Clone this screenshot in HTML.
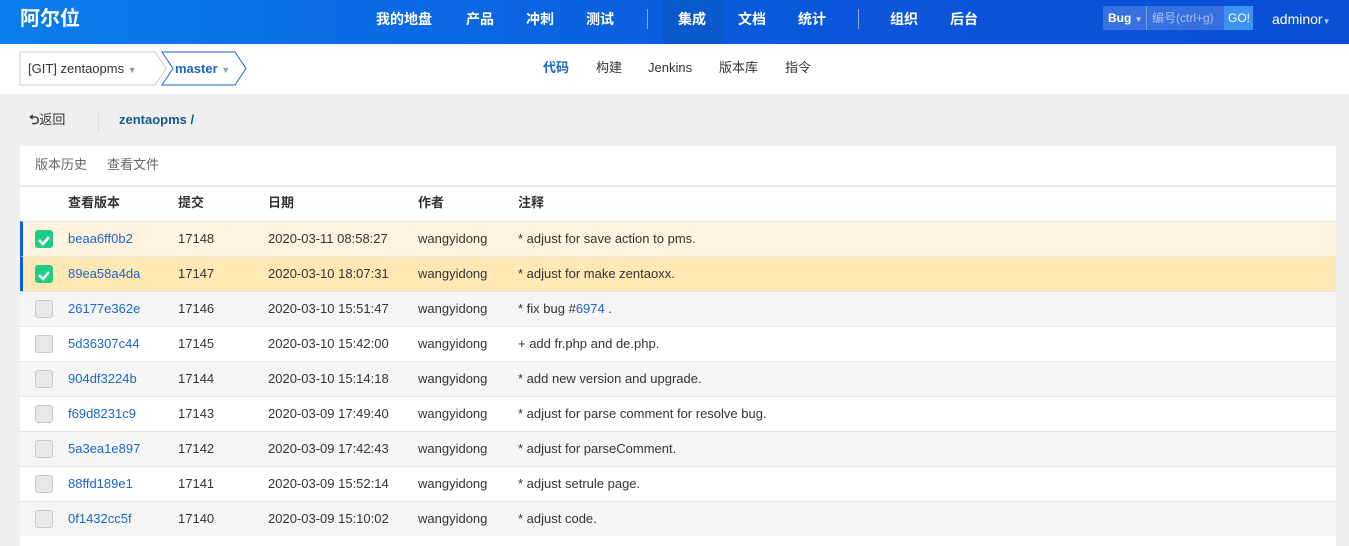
<!DOCTYPE html><html><head><meta charset="utf-8"><style>
*{margin:0;padding:0;box-sizing:border-box}
body{width:1349px;height:536px;overflow:hidden;background:#efeff0;font-family:"Liberation Sans","Noto Sans CJK SC",sans-serif;font-size:13px;line-height:16px;color:#333;position:relative}
.a{position:absolute;white-space:nowrap}
#hd{left:0;top:0;width:1349px;height:44px;background:linear-gradient(90deg,#0a7ded,#0b57dc 60%,#0a4fd6)}
.nv{color:#fff;font-size:14px;font-weight:bold;top:11px;line-height:16px}
.sep{top:9px;width:1px;height:20px;background:rgba(255,255,255,.5)}
#sub{left:0;top:44px;width:1349px;height:50px;background:#fff}
.tb{top:60px;font-size:13px;color:#333;line-height:16px}
#tbl{left:20px;top:146px;width:1316px;height:400px;background:#fff}
.row{position:absolute;left:20px;width:1316px;height:35px;border-top:1px solid #e5e5e5}
.row span{position:absolute;top:9px;line-height:16px}
.cb{position:absolute;left:15px;top:8px;width:18px;height:18px;border-radius:3px;background:#e8e8e8;border:1px solid #c8c8c8}
.cb.on{background:#1fcc83;border-color:#1fcc83}
.lk{color:#1a66c9}
</style></head><body>
<div id="hd" class="a"></div>
<div class="a" style="left:20px;top:7px;color:#fff;font-size:20px;line-height:24px;font-weight:bold">阿尔位</div>
<div class="a nv" style="left:376px">我的地盘</div>
<div class="a nv" style="left:466px">产品</div>
<div class="a nv" style="left:526px">冲刺</div>
<div class="a nv" style="left:586px">测试</div>
<div class="a sep" style="left:647px"></div>
<div class="a" style="left:663px;top:0;width:60px;height:44px;background:#0b5acb"></div>
<div class="a nv" style="left:678px">集成</div>
<div class="a nv" style="left:738px">文档</div>
<div class="a nv" style="left:798px">统计</div>
<div class="a sep" style="left:858px"></div>
<div class="a nv" style="left:890px">组织</div>
<div class="a nv" style="left:950px">后台</div>
<div class="a" style="left:1103px;top:6px;width:150px;height:24px;background:rgba(255,255,255,.18);border-radius:2px"></div>
<div class="a" style="left:1108px;top:10px;color:#fff;font-size:12px;font-weight:bold">Bug <span style="font-size:8px;opacity:.7">▼</span></div>
<div class="a" style="left:1146px;top:6px;width:1px;height:24px;background:rgba(255,255,255,.3)"></div>
<div class="a" style="left:1152px;top:10px;color:rgba(255,255,255,.55);font-size:12px">编号(ctrl+g)</div>
<div class="a" style="left:1224px;top:6px;width:29px;height:24px;background:#3d93ef"></div>
<div class="a" style="left:1228px;top:10px;color:#fff;font-size:12px">GO!</div>
<div class="a" style="left:1272px;top:11px;color:#fff;font-size:14px">adminor<span style="font-size:8px;opacity:.7">▼</span></div>
<div id="sub" class="a"></div>
<svg class="a" style="left:19px;top:51px" width="232" height="36"><path d="M1 1H136L147 17.5L136 34H1Z" fill="#fff" stroke="#ccc"/><path d="M143 1H216L227 17.5L216 34H143L154 17.5Z" fill="#fff" stroke="#1a66c9"/></svg>
<div class="a" style="left:28px;top:61px;font-size:13px;color:#333">[GIT] zentaopms <span style="font-size:9px;color:#999">▼</span></div>
<div class="a" style="left:175px;top:61px;font-size:13px;color:#1a66c9;font-weight:bold">master <span style="font-size:9px;color:#8ab">▼</span></div>
<div class="a tb" style="left:543px;color:#1a66c9;font-weight:bold">代码</div>
<div class="a tb" style="left:596px">构建</div>
<div class="a tb" style="left:648px">Jenkins</div>
<div class="a tb" style="left:719px">版本库</div>
<div class="a tb" style="left:785px">指令</div>
<div class="a" style="left:29px;top:112px;font-size:13px;color:#333"><b>⮌</b>返回</div>
<div class="a" style="left:98px;top:110px;width:1px;height:22px;background:#ddd"></div>
<div class="a" style="left:119px;top:112px;font-size:13px;color:#135d86;font-weight:bold">zentaopms /</div>
<div id="tbl" class="a"></div>
<div class="a" style="left:35px;top:157px;color:#666">版本历史</div>
<div class="a" style="left:107px;top:157px;color:#666">查看文件</div>
<div class="a" style="left:20px;top:185px;width:1316px;height:2px;background:#e8e8e8"></div>
<div class="row" style="top:187px;border:none;font-weight:bold"><span style="left:48px;top:8px">查看版本</span><span style="left:158px;top:8px">提交</span><span style="left:248px;top:8px">日期</span><span style="left:398px;top:8px">作者</span><span style="left:498px;top:8px">注释</span></div>
<div class="row" style="top:221px;background:#fff3df;border-left:3px solid #0b5fd8"><div class="cb on" style="left:12px"></div><span class="lk" style="left:45px">beaa6ff0b2</span><span style="left:155px">17148</span><span style="left:245px">2020-03-11 08:58:27</span><span style="left:395px">wangyidong</span><span style="left:495px">* adjust for save action to pms.</span></div>
<div class="row" style="top:256px;background:#ffe8b4;border-left:3px solid #0b5fd8"><div class="cb on" style="left:12px"></div><span class="lk" style="left:45px">89ea58a4da</span><span style="left:155px">17147</span><span style="left:245px">2020-03-10 18:07:31</span><span style="left:395px">wangyidong</span><span style="left:495px">* adjust for make zentaoxx.</span></div>
<div class="row" style="top:291px;background:#f5f5f6"><div class="cb"></div><span class="lk" style="left:48px">26177e362e</span><span style="left:158px">17146</span><span style="left:248px">2020-03-10 15:51:47</span><span style="left:398px">wangyidong</span><span style="left:498px">* fix bug #<span class="lk" style="position:static">6974</span> .</span></div>
<div class="row" style="top:326px;background:#fff"><div class="cb"></div><span class="lk" style="left:48px">5d36307c44</span><span style="left:158px">17145</span><span style="left:248px">2020-03-10 15:42:00</span><span style="left:398px">wangyidong</span><span style="left:498px">+ add fr.php and de.php.</span></div>
<div class="row" style="top:361px;background:#f5f5f6"><div class="cb"></div><span class="lk" style="left:48px">904df3224b</span><span style="left:158px">17144</span><span style="left:248px">2020-03-10 15:14:18</span><span style="left:398px">wangyidong</span><span style="left:498px">* add new version and upgrade.</span></div>
<div class="row" style="top:396px;background:#fff"><div class="cb"></div><span class="lk" style="left:48px">f69d8231c9</span><span style="left:158px">17143</span><span style="left:248px">2020-03-09 17:49:40</span><span style="left:398px">wangyidong</span><span style="left:498px">* adjust for parse comment for resolve bug.</span></div>
<div class="row" style="top:431px;background:#f5f5f6"><div class="cb"></div><span class="lk" style="left:48px">5a3ea1e897</span><span style="left:158px">17142</span><span style="left:248px">2020-03-09 17:42:43</span><span style="left:398px">wangyidong</span><span style="left:498px">* adjust for parseComment.</span></div>
<div class="row" style="top:466px;background:#fff"><div class="cb"></div><span class="lk" style="left:48px">88ffd189e1</span><span style="left:158px">17141</span><span style="left:248px">2020-03-09 15:52:14</span><span style="left:398px">wangyidong</span><span style="left:498px">* adjust setrule page.</span></div>
<div class="row" style="top:501px;background:#f5f5f6"><div class="cb"></div><span class="lk" style="left:48px">0f1432cc5f</span><span style="left:158px">17140</span><span style="left:248px">2020-03-09 15:10:02</span><span style="left:398px">wangyidong</span><span style="left:498px">* adjust code.</span></div>
<svg class="a" style="left:36px;top:232px" width="16" height="50"><path d="M3 8L7 12L13 5" stroke="#fff" stroke-width="2.5" fill="none"/><path d="M3 43L7 47L13 40" stroke="#fff" stroke-width="2.5" fill="none"/></svg>
</body></html>
